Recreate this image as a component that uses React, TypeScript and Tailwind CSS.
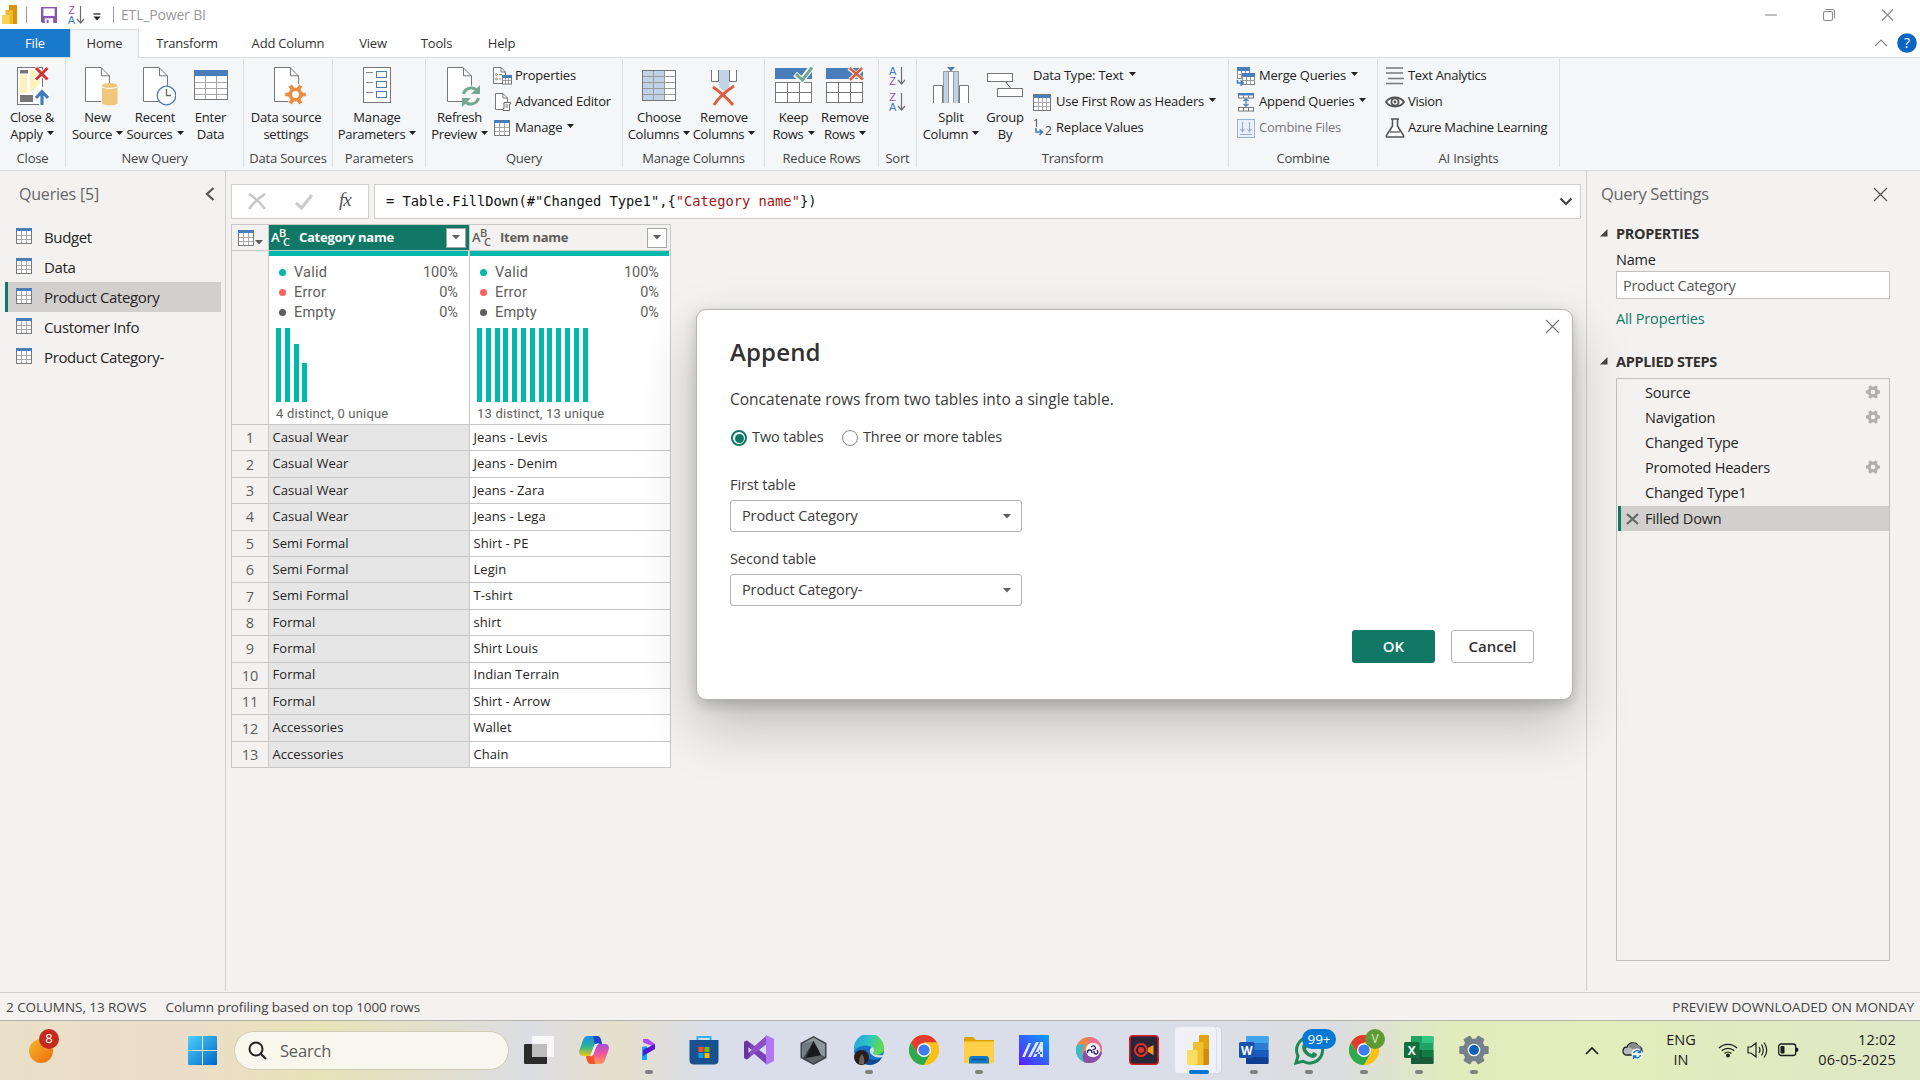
import React from "react";

type Kids = { children?: React.ReactNode };

/* ---------- small shared pieces ---------- */
function Caret() {
  return (
    <svg width="7" height="4" viewBox="0 0 7 4" className="-mt-[6px] ml-[5px] inline-block shrink-0 align-middle">
      <path d="M0 0H7L3.5 4Z" fill="#1f1f1f" />
    </svg>
  );
}

function GridIcon({ w = 16, h = 16 }: { w?: number; h?: number }) {
  return (
    <svg width={w} height={h} viewBox="0 0 16 16" className="shrink-0" shapeRendering="crispEdges">
      <rect x="0.5" y="0.5" width="15" height="15" fill="#fff" stroke="#7a7a7a" />
      <path d="M1 7.5H15M1 11.5H15M5.5 3V15M10.5 3V15" stroke="#a9a9a9" />
      <rect width="16" height="3" fill="#4a7ebb" />
    </svg>
  );
}

const docPath = "M0.5 0.5H16L24.5 9V34.5H0.5Z";
function Doc({ children }: Kids) {
  return (
    <svg width="33" height="40" viewBox="0 0 33 40">
      <path d={docPath} fill="#fff" stroke="#767676" />
      <path d="M16.5 0.5V8.8H24.5" fill="none" stroke="#767676" />
      {children}
    </svg>
  );
}

/* ---------- ribbon icons ---------- */
const CloseApplyIcon = () => (
  <svg width="32" height="40" viewBox="0 0 32 40">
    <rect x="0.5" y="0.5" width="25" height="37" fill="#fff" stroke="#767676" />
    <rect x="3" y="3" width="8" height="3.5" fill="#767676" />
    <path d="M3 8H10V26H3ZM13 3H23V16L13 26Z" fill="#fff2b8" />
    <rect x="3" y="28" width="13" height="7" fill="#767676" />
    <path d="M18 1L31 13M31 1L18 13" stroke="#fff" strokeWidth="5" />
    <path d="M19 1L30.500 12.500M30.500 1L19 12.500" stroke="#d13438" strokeWidth="3" />
    <path d="M25 38V25M18.500 31L25 24L31.500 31" fill="none" stroke="#fff" strokeWidth="6" />
    <path d="M25 38V25M19 31L25 24.500L31 31" fill="none" stroke="#3f7cbf" strokeWidth="3.200" />
  </svg>
);
const NewSourceIcon = () => (
  <Doc>
    <path d="M16 18V36C16 39.500 33 39.500 33 36V18Z" fill="#f5f6f7" />
    <path d="M17 19V36C17 39 32.500 39 32.500 36V19Z" fill="#efc67c" />
    <ellipse cx="24.700" cy="18.500" rx="7.700" ry="2.600" fill="#efc67c" />
    <path d="M17 19.500C18 22 31 22 32.500 19.500" fill="none" stroke="#fff" />
  </Doc>
);
const RecentIcon = () => (
  <Doc>
    <circle cx="23.500" cy="28.500" r="9.300" fill="#fff" stroke="#4a7ebb" strokeWidth="1.300" />
    <path d="M23.500 22V28.500H28" fill="none" stroke="#666" strokeWidth="1.300" />
  </Doc>
);
const EnterDataIcon = () => (
  <svg width="34" height="31" viewBox="0 0 34 31" shapeRendering="crispEdges">
    <rect x="0.500" y="0.500" width="33" height="29" fill="#fff" stroke="#767676" />
    <path d="M1 12.500H33M1 18.500H33M1 24.500H33M11.500 6V29M22.500 6V29" stroke="#a6a6a6" />
    <rect width="34" height="6" fill="#4a7ebb" />
  </svg>
);
function gearD(cx: number, cy: number, ro: number, ri: number, n: number) {
  let d = "";
  for (let i = 0; i < n; i++) {
    const a = (i * 2 * Math.PI) / n;
    const s = Math.PI / n;
    const pts: [number, number][] = [
      [ri, a - s * 0.6],
      [ro, a - s * 0.4],
      [ro, a + s * 0.4],
      [ri, a + s * 0.6],
    ];
    pts.forEach(([r, t], j) => {
      d += (i === 0 && j === 0 ? "M" : "L") + (cx + r * Math.cos(t)).toFixed(2) + " " + (cy + r * Math.sin(t)).toFixed(2);
    });
  }
  return d + "Z";
}
const SettingsDocIcon = () => (
  <Doc>
    <path d={gearD(21.5, 27.5, 11, 7.5, 6)} fill="#e88d3f" stroke="#f5f6f7" strokeWidth="1" />
    <circle cx="21.500" cy="27.500" r="3.400" fill="#fff" />
  </Doc>
);
const ParamsIcon = () => (
  <svg width="28" height="37" viewBox="0 0 28 37" shapeRendering="crispEdges">
    <rect x="0.500" y="0.500" width="27" height="35" fill="#fff" stroke="#767676" />
    <path d="M3 5.500H10M3 15.500H10M3 25.500H10" stroke="#888" />
    <g fill="#fff" stroke="#4a7ebb">
      <rect x="13.500" y="4.500" width="10" height="6" />
      <rect x="13.500" y="14.500" width="10" height="6" />
      <rect x="13.500" y="24.500" width="10" height="6" />
    </g>
  </svg>
);
const RefreshIcon = () => (
  <Doc>
    <circle cx="24" cy="29" r="10.500" fill="#f5f6f7" />
    <path d="M16.500 27A8 8 0 0 1 30.500 24M31.500 31A8 8 0 0 1 17.500 34" fill="none" stroke="#74a892" strokeWidth="3" />
    <path d="M33 18V27H24ZM15 40V31H24Z" fill="#74a892" />
  </Doc>
);
const ChooseColsIcon = () => (
  <svg width="34" height="31" viewBox="0 0 34 31" shapeRendering="crispEdges">
    <rect x="0.500" y="0.500" width="33" height="30" fill="#fff" stroke="#767676" />
    <rect x="1" y="1" width="22" height="29" fill="#bfd2e8" />
    <path d="M1 6.500H33M1 12.500H33M1 18.500H33M1 24.500H33M11.500 1V30M22.500 1V30" stroke="#999" />
  </svg>
);
const RemoveColsIcon = () => (
  <svg width="28" height="37" viewBox="0 0 28 37">
    <path d="M1.500 0V11.500H8.500V0M19.500 0V11.500H26.500V0" fill="#fff" stroke="#767676" />
    <path d="M9 0H19V17L14 21L9 17Z" fill="#bfd2e8" />
    <path d="M3 17C10 22 18 29 23 35M24 16C16 21 9 27 4 35" fill="none" stroke="#d8603f" strokeWidth="2.800" />
  </svg>
);
function RowsIcon({ remove }: { remove?: boolean }) {
  return (
    <svg width="40" height="37" viewBox="0 0 40 37">
      <g shapeRendering="crispEdges">
        <rect x="1" y="1" width="37" height="11" fill="#4a7ebb" />
        <rect x="1.500" y="15.500" width="36" height="20" fill="#fff" stroke="#767676" />
        <path d="M2 25.500H37M13.500 16V35M25.500 16V35" stroke="#767676" />
      </g>
      {remove ? (
        <>
          <path d="M24 1L38 13M38 1L25 13" stroke="#f5f6f7" strokeWidth="4.500" />
          <path d="M24.500 1L38 12.500M37 1L25 13" stroke="#d8603f" strokeWidth="2.500" />
        </>
      ) : (
        <>
          <path d="M21 7L28 13L38 0" fill="none" stroke="#f5f6f7" strokeWidth="6" />
          <path d="M22 7L28.500 13L38 0.500" fill="none" stroke="#74a892" strokeWidth="3" />
        </>
      )}
    </svg>
  );
}
const SplitIcon = () => (
  <svg width="36" height="37" viewBox="0 0 36 37">
    <path d="M14 0H22L18 4.500Z" fill="#4a7ebb" />
    <path d="M0.500 36V18.500H9.500V36M26.500 36V18.500H35.500V36" fill="#fff" stroke="#767676" />
    <path d="M10.500 36V4.500H25.500V36" fill="#fff" stroke="#999" />
    <path d="M11 5H15V36H11ZM21 5H25V36H21Z" fill="#bfd2e8" />
    <path d="M15.500 5V36M20.500 5V36" stroke="#999" />
  </svg>
);
const GroupByIcon = () => (
  <svg width="37" height="37" viewBox="0 0 37 37">
    <path d="M18 14L25 23" stroke="#555" />
    <rect x="0.500" y="6.500" width="25" height="8" fill="#fff" stroke="#767676" />
    <rect x="10.500" y="21.500" width="25" height="8" fill="#fff" stroke="#767676" />
  </svg>
);
function SortIcon({ desc }: { desc?: boolean }) {
  const a = desc ? "Z" : "A";
  const b = desc ? "A" : "Z";
  return (
    <div className="flex h-5 w-[18px] items-stretch">
      <div className={"flex w-[9px] flex-col items-center font-['Liberation_Sans',sans-serif] text-[11px] leading-[10px] " + (desc ? "text-[#8a57b2]" : "text-[#3f7cbf]")}>
        <span className="h-[10px]">{a}</span>
        <span className={"h-[10px] " + (desc ? "text-[#3f7cbf]" : "text-[#8a57b2]")}>{b}</span>
      </div>
      <svg width="9" height="19" viewBox="0 0 9 19">
        <path d="M4.500 1V18M1 14L4.500 18L8 14" fill="none" stroke="#6e6e6e" strokeWidth="1.200" />
      </svg>
    </div>
  );
}
const PropsIcon = () => (
  <svg width="20" height="18" viewBox="0 0 20 18">
    <path d="M0.500 0.500H8L12.500 5V16.500H0.500Z" fill="#fff" stroke="#767676" />
    <path d="M8 0.500V5H12.500" fill="none" stroke="#767676" />
    <circle cx="3.500" cy="7.500" r="1" fill="none" stroke="#777" strokeWidth=".8" />
    <circle cx="3.500" cy="12" r="1" fill="none" stroke="#777" strokeWidth=".8" />
    <path d="M6 7.500H9M6 12H8" stroke="#888" />
    <rect x="9.500" y="8.500" width="9" height="8.500" fill="#fff" stroke="#767676" />
    <path d="M12.500 11V17M15.500 11V17M9 13.500H19" stroke="#888" strokeWidth=".8" />
    <rect x="9" y="8" width="10" height="3" fill="#4a7ebb" />
  </svg>
);
const AdvIcon = () => (
  <svg width="20" height="18" viewBox="0 0 20 18">
    <path d="M2.500 0.500H10L14.500 5V16.500H2.500Z" fill="#fff" stroke="#767676" />
    <path d="M10 0.500V5H14.500" fill="none" stroke="#767676" />
    <path d="M11 9.500H17.500V11H16.500V17.500H10V15.500H11Z" fill="#fff" stroke="#666" />
    <path d="M12.500 12H15M12.500 14H15" stroke="#666" />
  </svg>
);
const MergeIcon = () => (
  <svg width="20" height="19" viewBox="0 0 20 19">
    <rect x="1.500" y="0.500" width="12" height="11" fill="#fff" stroke="#888" />
    <path d="M1 7.500H8M5.500 3V12M9.500 3V7" stroke="#999" />
    <rect x="1" y="0" width="13" height="4" fill="#4a7ebb" />
    <rect x="6.500" y="6.500" width="12" height="11" fill="#fff" stroke="#888" />
    <path d="M6 13.500H19M10.500 9V18M14.500 9V18" stroke="#999" />
    <rect x="6" y="6" width="13" height="4" fill="#4a7ebb" />
    <path d="M1.500 13V16H7M4.500 13.500L7 16L4.500 18.500" fill="none" stroke="#3f7cbf" strokeWidth="1.600" />
  </svg>
);
const AppendIcon = () => (
  <svg width="20" height="19" viewBox="0 0 20 19">
    <rect x="2.500" y="1" width="15" height="4" fill="#fff" stroke="#767676" />
    <rect x="2" y="0" width="16" height="2.500" fill="#4a7ebb" />
    <rect x="2.500" y="14.500" width="15" height="3.500" fill="#fff" stroke="#767676" />
    <path d="M7.500 2.500V5M12.500 2.500V5M7.500 15V18M12.500 15V18" stroke="#767676" />
    <path d="M10 6V13M7.500 8L10 5.800L12.500 8M7.500 11L10 13.200L12.500 11" fill="none" stroke="#4a7ebb" strokeWidth="1.200" />
  </svg>
);
const CombineIcon = () => (
  <svg width="20" height="19" viewBox="0 0 20 19">
    <rect x="1.500" y="0.500" width="17" height="18" fill="#eaf1fa" stroke="#9bb0cf" />
    <path d="M6.500 3V12M4.500 10L6.500 12.500L8.500 10M13.500 3V12M11.500 10L13.500 12.500L15.500 10M4 15.500H16" fill="none" stroke="#9bb0cf" strokeWidth="1.200" />
  </svg>
);
const HeadersIcon = () => (
  <svg width="18" height="17" viewBox="0 0 18 17" shapeRendering="crispEdges">
    <rect x="0.500" y="0.500" width="17" height="16" fill="#fff" stroke="#767676" />
    <path d="M1 8.500H17M1 12.500H17M5.500 1V16M9.500 1V16M13.500 1V16" stroke="#aaa" />
    <rect x="1" y="1" width="16" height="3" fill="#4a7ebb" />
  </svg>
);
const ReplaceIcon = () => (
  <div className="relative h-5 w-[18px] text-[11px] leading-none text-[#444]">
    <span className="absolute -top-px left-0">1</span>
    <span className="absolute top-[7px] left-[12px] text-[12px]">2</span>
    <svg width="9" height="8" viewBox="0 0 9 8" className="absolute top-[10px] left-[2px]">
      <path d="M1 0V4H7M4.500 1.500L7.500 4L4.500 7" fill="none" stroke="#3f7cbf" strokeWidth="1.600" />
    </svg>
  </div>
);
const TextAnIcon = () => (
  <svg width="20" height="18" viewBox="0 0 20 18">
    <path d="M1 1H18M1 6H18M3 11.500H19M1 16.500H18" stroke="#777" strokeWidth="1.400" />
  </svg>
);
const EyeIcon = () => (
  <svg width="20" height="14" viewBox="0 0 20 14">
    <path d="M1 7C5 1 15 1 19 7C15 13 5 13 1 7Z" fill="#fff" stroke="#555" strokeWidth="1.900" />
    <circle cx="10" cy="7" r="3.600" fill="none" stroke="#555" strokeWidth="1.900" />
    <circle cx="10" cy="7" r="1.400" fill="#555" />
  </svg>
);
const FlaskIcon = () => (
  <svg width="20" height="20" viewBox="0 0 20 20">
    <path d="M7.500 1V8L1.500 17.500V19H18.500V17.500L12.500 8V1M6 1H14" fill="#fff" stroke="#555" strokeWidth="1.600" />
    <path d="M5 14H15" stroke="#666" strokeWidth="1.400" />
  </svg>
);

/* ---------- ribbon layout ---------- */
function Big({ icon, a, b, caret, cls }: { icon: React.ReactNode; a: string; b: string; caret?: boolean; cls: string }) {
  return (
    <div className={"flex shrink-0 flex-col items-center " + cls}>
      <div className="flex h-[43px] items-start justify-center pt-px">{icon}</div>
      <div className="leading-[17px] whitespace-nowrap">{a}</div>
      <div className="flex items-center leading-[17px] tracking-[-0.270px] whitespace-nowrap">
        {b}
        {caret && (
          <svg width="7" height="4" viewBox="0 0 7 4" className="-mt-[4px] ml-[4px] shrink-0">
            <path d="M0 0H7L3.5 4Z" fill="#1f1f1f" />
          </svg>
        )}
      </div>
    </div>
  );
}
function Small({ icon, text, caret, dim, gap = "w-[22px]" }: { icon?: React.ReactNode; text: string; caret?: boolean; dim?: boolean; gap?: string }) {
  return (
    <div className={"flex h-[26px] items-center whitespace-nowrap " + (dim ? "text-[#777]" : "")}>
      {icon && <div className={"flex shrink-0 items-center " + gap}>{icon}</div>}
      <span>
        {text}
        {caret && <Caret />}
      </span>
    </div>
  );
}
function Group({ label, cls, children }: Kids & { label: string; cls: string }) {
  return (
    <div className={"flex h-[108px] shrink-0 flex-col border-r border-[#dcdee0] pt-[7px] " + cls}>
      <div className="flex h-[85px]">{children}</div>
      <div className="flex h-[17px] items-center justify-center pt-px whitespace-nowrap text-[#444]">{label}</div>
    </div>
  );
}

function TitleBar() {
  return (
    <div className="flex h-[29px] items-center bg-white">
      <svg width="16" height="20" viewBox="0 0 16 20" className="ml-[2px]">
        <rect x="7" y="0" width="8" height="19" fill="#d9930d" />
        <rect x="3.500" y="5" width="7.500" height="14" fill="#efbb2a" />
        <rect x="0" y="10" width="7.500" height="9" fill="#f7d64f" />
      </svg>
      <div className="ml-2 h-4 w-px bg-[#999]" />
      <svg width="16" height="16" viewBox="0 0 17 17" className="ml-[14px]">
        <path d="M0 0H17V17H1.500L0 15.500Z" fill="#8a57b2" />
        <rect x="2.500" y="1.500" width="12" height="8" fill="#fff" />
        <rect x="4" y="12" width="9" height="5" fill="#fff" />
        <rect x="6" y="13.500" width="2" height="3.500" fill="#8a57b2" />
      </svg>
      <div className="ml-[10px]">
        <SortIcon desc />
      </div>
      <svg width="8" height="8" viewBox="0 0 8 8" className="mt-1 ml-[8px]">
        <path d="M0.500 1H7.500" stroke="#222" strokeWidth="1.300" />
        <path d="M0.500 3.500H7.500L4 7.500Z" fill="#222" />
      </svg>
      <div className="ml-[12px] h-4 w-px bg-[#999]" />
      <div className="ml-[7px] text-[14px] tracking-[-0.170px] text-[#999]">ETL_Power BI</div>
      <div className="flex-1" />
      <svg width="130" height="14" viewBox="0 0 130 14" className="mr-[26px]" fill="none" stroke="#8a8a8a" strokeWidth="1.100">
        <path d="M1 7H13" />
        <rect x="59.500" y="3.500" width="9" height="9" rx="1.500" />
        <path d="M61.500 1.500H68.500Q70.500 1.500 70.500 3.500V10.500" />
        <path d="M118 1.500L129 12.500M129 1.500L118 12.500" />
      </svg>
    </div>
  );
}

function Tabs() {
  return (
    <div className="flex h-[29px] items-stretch border-b border-[#d8d9db] bg-white text-[13px] leading-[29px] tracking-[-0.2px] text-[#333]">
      <div className="w-[70px] bg-[#1979ca] text-center text-white">File</div>
      <div className="-mb-px w-[69px] border border-b-0 border-[#d8d9db] bg-[#f5f6f7] text-center leading-[27px]">Home</div>
      <div className="w-[96px] text-center">Transform</div>
      <div className="w-[106px] text-center">Add Column</div>
      <div className="w-[64px] text-center">View</div>
      <div className="w-[63px] text-center">Tools</div>
      <div className="w-[67px] text-center">Help</div>
      <div className="flex-1" />
      <svg width="46" height="22" viewBox="0 0 46 22" className="mt-[3px]">
        <path d="M1 14L7 8L13 14" fill="none" stroke="#888" strokeWidth="1.200" />
        <circle cx="33" cy="11" r="9.800" fill="#0a66c2" />
        <text x="33" y="16" textAnchor="middle" fontSize="14" fill="#fff" fontFamily="Open Sans">?</text>
      </svg>
    </div>
  );
}

function Ribbon() {
  return (
    <div className="flex h-[113px] items-start border-b border-[#d6d8da] bg-[#f5f6f7] pt-px text-[13px] tracking-[-0.2px] text-[#222]">
      <Group label="Close" cls="w-[66px]">
        <Big icon={<div className="ml-[2px]"><CloseApplyIcon /></div>} a="Close &" b="Apply" caret cls="w-[64px]" />
      </Group>
      <Group label="New Query" cls="w-[178px]">
        <Big icon={<div className="ml-2"><NewSourceIcon /></div>} a="New" b="Source" caret cls="ml-[3px] w-[57px]" />
        <Big icon={<div className="ml-2"><RecentIcon /></div>} a="Recent" b="Sources" caret cls="w-[58px]" />
        <Big icon={<div className="pt-[3px]"><EnterDataIcon /></div>} a="Enter" b="Data" cls="w-[53px]" />
      </Group>
      <Group label="Data Sources" cls="w-[89px]">
        <Big icon={<div className="ml-2"><SettingsDocIcon /></div>} a="Data source" b="settings" cls="w-[84px]" />
      </Group>
      <Group label="Parameters" cls="w-[93px]">
        <Big icon={<ParamsIcon />} a="Manage" b="Parameters" caret cls="w-[88px]" />
      </Group>
      <Group label="Query" cls="w-[197px]">
        <Big icon={<div className="ml-2"><RefreshIcon /></div>} a="Refresh" b="Preview" caret cls="w-[67px]" />
        <div className="-mt-[3px] flex flex-col">
          <Small icon={<PropsIcon />} text="Properties" />
          <Small icon={<AdvIcon />} text="Advanced Editor" />
          <Small icon={<GridIcon w={17} h={16} />} text="Manage" caret />
        </div>
      </Group>
      <Group label="Manage Columns" cls="w-[142px]">
        <Big icon={<div className="pt-[3px]"><ChooseColsIcon /></div>} a="Choose" b="Columns" caret cls="ml-[3px] w-[66px]" />
        <Big icon={<div className="pt-[3px]"><RemoveColsIcon /></div>} a="Remove" b="Columns" caret cls="w-[64px]" />
      </Group>
      <Group label="Reduce Rows" cls="w-[114px]">
        <Big icon={<RowsIcon />} a="Keep" b="Rows" caret cls="ml-[3px] w-[51px]" />
        <Big icon={<RowsIcon remove />} a="Remove" b="Rows" caret cls="w-[52px]" />
      </Group>
      <Group label="Sort" cls="w-[38px]">
        <div className="ml-[9px] flex flex-col gap-[6px]">
          <SortIcon />
          <SortIcon desc />
        </div>
      </Group>
      <Group label="Transform" cls="w-[312px]">
        <Big icon={<SplitIcon />} a="Split" b="Column" caret cls="ml-[2px] w-[64px]" />
        <Big icon={<GroupByIcon />} a="Group" b="By" cls="w-[44px]" />
        <div className="-mt-[3px] ml-[6px] flex flex-col">
          <Small text="Data Type: Text" caret />
          <Small icon={<HeadersIcon />} text="Use First Row as Headers" caret gap="w-[23px]" />
          <Small icon={<ReplaceIcon />} text="Replace Values" gap="w-[23px]" />
        </div>
      </Group>
      <Group label="Combine" cls="w-[149px]">
        <div className="-mt-[3px] ml-[7px] flex flex-col">
          <Small icon={<MergeIcon />} text="Merge Queries" caret gap="w-[23px]" />
          <Small icon={<AppendIcon />} text="Append Queries" caret gap="w-[23px]" />
          <Small icon={<CombineIcon />} text="Combine Files" dim gap="w-[23px]" />
        </div>
      </Group>
      <Group label="AI Insights" cls="w-[182px]">
        <div className="-mt-[3px] ml-[7px] flex flex-col tracking-[-0.320px]">
          <Small icon={<TextAnIcon />} text="Text Analytics" gap="w-[23px]" />
          <Small icon={<EyeIcon />} text="Vision" gap="w-[23px]" />
          <Small icon={<FlaskIcon />} text="Azure Machine Learning" gap="w-[23px]" />
        </div>
      </Group>
    </div>
  );
}

/* ---------- queries pane ---------- */
const queries = ["Budget", "Data", "Product Category", "Customer Info", "Product Category-"];
function QueriesPane() {
  return (
    <div className="h-[820px] w-[226px] shrink-0 border-r border-[#cfcfcf]">
      <div className="flex h-[46px] items-center justify-between pr-[10px] pl-[19px]">
        <span className="text-[16px] tracking-[-0.2px] text-[#666]">Queries [5]</span>
        <svg width="10" height="14" viewBox="0 0 10 14">
          <path d="M8.500 1L2 7L8.500 13" fill="none" stroke="#555" strokeWidth="2.200" />
        </svg>
      </div>
      <div className="pt-[5px] pr-1 pl-[5px]">
        {queries.map((q) => (
          <div
            key={q}
            className={
              "flex h-[30px] items-center border-l-[3px] pl-2 text-[15px] tracking-[-0.370px] text-[#252423] " +
              (q === "Product Category" ? "border-[#117865] bg-[#d2d0ce]" : "border-transparent")
            }
          >
            <div className="-mt-[2px] mr-3">
              <GridIcon />
            </div>
            {q}
          </div>
        ))}
      </div>
    </div>
  );
}

/* ---------- data grid ---------- */
const rows: [string, string][] = [
  ["Casual Wear", "Jeans - Levis"],
  ["Casual Wear", "Jeans - Denim"],
  ["Casual Wear", "Jeans - Zara"],
  ["Casual Wear", "Jeans - Lega"],
  ["Semi Formal", "Shirt - PE"],
  ["Semi Formal", "Legin"],
  ["Semi Formal", "T-shirt"],
  ["Formal", "shirt"],
  ["Formal", "Shirt Louis"],
  ["Formal", "Indian Terrain"],
  ["Formal", "Shirt - Arrow"],
  ["Accessories", "Wallet"],
  ["Accessories", "Chain"],
];
const stats = [
  { label: "Valid", pct: "100%", dot: "bg-[#01b8aa]" },
  { label: "Error", pct: "0%", dot: "bg-[#fd625e]" },
  { label: "Empty", pct: "0%", dot: "bg-[#605e5c]" },
];
function ColHeader({ name, active }: { name: string; active?: boolean }) {
  return (
    <div className={"flex w-[201px] items-center border-r border-[#c8c8c8] pr-[3px] pl-[2px] " + (active ? "bg-[#117865] text-white" : "bg-[#f3f2f1] text-[#605e5c]")}>
      <div className="relative h-[20px] w-[20px] text-[13px] leading-none font-semibold">
        <span className="absolute top-[3px] left-0">A</span>
        <span className="absolute -top-px left-[8px] text-[11px]">B</span>
        <span className="absolute top-[8px] left-[12px] text-[11px]">C</span>
      </div>
      <span className="ml-2 flex-1 pt-px text-[13px] font-bold tracking-[-0.27px]">{name}</span>
      <div className="flex h-5 w-5 items-center justify-center border border-[#a6a6a6] bg-white">
        <svg width="8" height="5" viewBox="0 0 8 5">
          <path d="M0 0H8L4 4.500Z" fill="#605e5c" />
        </svg>
      </div>
    </div>
  );
}
function Profile({ bars, caption }: { bars: number[]; caption: string }) {
  return (
    <div className="w-[201px] border-r border-[#c8c8c8] bg-white font-[Roboto] text-[#605e5c]">
      <div className="mr-px h-[5px] bg-[#01b8aa]" />
      <div className="pt-[7px] pr-[11px] pl-[10px] text-[14.500px] tracking-[0.2px]">
        {stats.map((s) => (
          <div key={s.label} className="flex h-5 items-center">
            <span className={"-mt-[2px] mr-2 h-[7px] w-[7px] rounded-full " + s.dot} />
            <span className="flex-1">{s.label}</span>
            <span className="tracking-normal">{s.pct}</span>
          </div>
        ))}
      </div>
      <div className="mt-[5px] ml-[7px] flex h-[74px] items-end gap-[3.8px]">
        {bars.map((b, i) => (
          <div key={i} className="w-[5px] bg-[#01b8aa]" style={{ height: b }} />
        ))}
      </div>
      <div className="ml-[7px] pt-[3px] text-[13px] leading-[18px] tracking-[0.190px]">{caption}</div>
    </div>
  );
}
function DataTable() {
  return (
    <div className="mt-[5px] ml-[5px] w-[440px] border-t border-l border-[#c8c8c8]">
      <div className="flex h-[26px] border-b border-[#c8c8c8]">
        <div className="flex w-[37px] items-center border-r border-[#c8c8c8] pl-[6px]">
          <GridIcon />
          <svg width="8" height="5" viewBox="0 0 8 5" className="mt-[10px] ml-px">
            <path d="M0 0H8L4 4.500Z" fill="#605e5c" />
          </svg>
        </div>
        <ColHeader name="Category name" active />
        <ColHeader name="Item name" />
      </div>
      <div className="flex h-[174px] border-b border-[#c8c8c8]">
        <div className="w-[37px] border-r border-[#c8c8c8]" />
        <Profile bars={[74, 74, 58, 39]} caption="4 distinct, 0 unique" />
        <Profile bars={Array(13).fill(74)} caption="13 distinct, 13 unique" />
      </div>
      {rows.map(([a, b], i) => (
        <div key={i} className="flex h-[26.4px] border-b border-[#c8c8c8] text-[13px] text-[#252423]">
          <div className="flex w-[37px] items-center justify-center border-r border-[#c8c8c8] pt-px text-[14.500px] text-[#605e5c]">{i + 1}</div>
          <div className="flex w-[201px] items-center border-r border-[#c8c8c8] bg-[#e6e6e6] pl-[3.500px] tracking-[0.060px]">{a}</div>
          <div className="flex w-[201px] items-center border-r border-[#c8c8c8] bg-white pl-[3.500px] tracking-[0.060px]">{b}</div>
        </div>
      ))}
    </div>
  );
}
function FormulaBar() {
  return (
    <div className="mt-[13px] ml-[5px] flex h-[35px] gap-[5px]">
      <div className="flex w-[138px] items-center border border-[#d0d0d0] bg-white pl-4">
        <svg width="18" height="17" viewBox="0 0 18 17">
          <path d="M1 1C7 5 13 10 17 16M17 1C11 5 5 10 1 16" fill="none" stroke="#c8c8c8" strokeWidth="2.600" />
        </svg>
        <svg width="19" height="16" viewBox="0 0 19 16" className="ml-[29px]">
          <path d="M1 9L6.500 14L17 1" fill="none" stroke="#cccccc" strokeWidth="3.200" />
        </svg>
        <span className="-mt-[3px] ml-[25px] font-['Liberation_Serif'] text-[19px] tracking-[-1px] text-[#555] italic">fx</span>
      </div>
      <div className="flex w-[1207px] items-center justify-between border border-[#d0d0d0] bg-white pr-[7px] pl-[11px]">
        <span className="font-['DejaVu_Sans_Mono','Liberation_Mono',monospace] text-[13.750px] whitespace-pre text-[#111]">
          {'= Table.FillDown(#"Changed Type1",{'}
          <span className="text-[#a31515]">"Category name"</span>
          {"})"}
        </span>
        <svg width="14" height="10" viewBox="0 0 14 10">
          <path d="M1.500 1.500L7 7L12.500 1.500" fill="none" stroke="#444" strokeWidth="2.200" />
        </svg>
      </div>
    </div>
  );
}

/* ---------- append dialog ---------- */
function Select({ label, value }: { label: string; value: string }) {
  return (
    <div>
      <div className="leading-[20px]">{label}</div>
      <div className="mt-[5px] flex h-[32px] w-[292px] items-center justify-between rounded-[3px] border border-[#b3b0ad] bg-white pr-[10px] pl-[11px]">
        {value}
        <svg width="8" height="5" viewBox="0 0 8 5">
          <path d="M0 0H8L4 4.500Z" fill="#605e5c" />
        </svg>
      </div>
    </div>
  );
}
function Dialog() {
  return (
    <div className="absolute top-[309px] left-[696px] h-[391px] w-[877px] rounded-[10px] border border-[#b5b3b1] bg-white pl-[33px] text-[14.500px] tracking-[-0.100px] text-[#3b3a39] shadow-[0_26px_58px_rgba(0,0,0,0.22),0_5px_14px_rgba(0,0,0,0.18)]">
      <svg width="15" height="15" viewBox="0 0 15 15" className="absolute top-[9px] right-[12px]">
        <path d="M1 1L14 14M14 1L1 14" stroke="#777" strokeWidth="1.200" />
      </svg>
      <h1 className="pt-[25px] text-[24px] leading-[34px] font-semibold tracking-[0.150px] text-[#323130]">Append</h1>
      <p className="mt-[19px] text-[15.500px] leading-[22px] tracking-[0.010px]">Concatenate rows from two tables into a single table.</p>
      <div className="mt-[16px] flex h-[22px] items-center">
        <span className="mt-[2px] mr-[5px] ml-[1px] flex h-4 w-4 items-center justify-center rounded-full border-2 border-[#117865]">
          <span className="h-[9px] w-[9px] rounded-full bg-[#117865]" />
        </span>
        <span className="w-[71px] whitespace-nowrap">Two tables</span>
        <span className="mt-[2px] mr-[5px] ml-[19px] h-4 w-4 rounded-full border border-[#8a8886] bg-white" />
        <span className="tracking-[-0.150px]">Three or more tables</span>
      </div>
      <div className="mt-[27px] flex flex-col gap-[17px]">
        <Select label="First table" value="Product Category" />
        <Select label="Second table" value="Product Category-" />
      </div>
      <div className="mt-[24px] flex justify-end gap-4 pr-[38px] font-semibold tracking-normal">
        <div className="flex h-[33px] w-[83px] items-center justify-center rounded-[3px] bg-[#117865] text-[15px] text-white">OK</div>
        <div className="flex h-[33px] w-[83px] items-center justify-center rounded-[3px] border border-[#b3b0ad] text-[15px] text-[#323130]">Cancel</div>
      </div>
    </div>
  );
}

/* ---------- settings pane ---------- */
const steps: { name: string; gear?: boolean }[] = [
  { name: "Source", gear: true },
  { name: "Navigation", gear: true },
  { name: "Changed Type" },
  { name: "Promoted Headers", gear: true },
  { name: "Changed Type1" },
  { name: "Filled Down" },
];
function Heading({ text }: { text: string }) {
  return (
    <div className="flex h-6 items-center text-[14.500px] font-bold tracking-[-0.350px] text-[#323130]">
      <svg width="8" height="8" viewBox="0 0 8 8" className="-mt-[2px] mr-[8px]">
        <path d="M7.500 0V7.500H0Z" fill="#444" />
      </svg>
      {text}
    </div>
  );
}
function SettingsPane() {
  return (
    <div className="h-[820px] w-[334px] border-l border-[#cfcfcf] pl-[13px] text-[14.500px] tracking-[-0.200px] text-[#252423]">
      <div className="flex h-[47px] items-center justify-between pr-[32px] pl-px">
        <span className="text-[16.500px] tracking-[-0.360px] text-[#666]">Query Settings</span>
        <svg width="15" height="15" viewBox="0 0 15 15">
          <path d="M1 1L14 14M14 1L1 14" stroke="#555" strokeWidth="1.200" />
        </svg>
      </div>
      <div className="pt-[4px]">
        <Heading text="PROPERTIES" />
        <div className="mt-[4px] ml-[16px]">
          <div className="h-[21px] leading-[20px]">Name</div>
          <div className="flex h-[28px] w-[274px] items-center border border-[#c0c0c0] bg-white pt-[2px] pl-[6px] tracking-[-0.300px] text-[#555]">Product Category</div>
          <div className="mt-[9px] leading-[22px] tracking-[-0.130px] text-[#117865]">All Properties</div>
        </div>
        <div className="mt-[20px]">
          <Heading text="APPLIED STEPS" />
        </div>
        <div className="mt-[4px] ml-[16px] h-[583px] w-[274px] border border-[#c0c0c0] pt-px">
          {steps.map((s) => (
            <div key={s.name} className={"ml-px flex h-[25.200px] items-center border-l-[3px] pr-2 " + (s.name === "Filled Down" ? "border-[#117865] bg-[#d2d0ce]" : "border-transparent")}>
              <div className="w-[24px] pl-[5px]">
                {s.name === "Filled Down" && (
                  <svg width="13" height="12" viewBox="0 0 13 12">
                    <path d="M1 1L12 11M12 1L1 11" stroke="#666" strokeWidth="2.200" />
                  </svg>
                )}
              </div>
              <span className="flex-1">{s.name}</span>
              {s.gear && (
                <svg width="16" height="16" viewBox="0 0 16 16" className="-mt-[2px]">
                  <path d={gearD(8, 8, 7.2, 5.4, 6)} fill="#b0b0b0" />
                  <circle cx="8" cy="8" r="2.300" fill="#f3f2f1" />
                </svg>
              )}
            </div>
          ))}
        </div>
      </div>
    </div>
  );
}

/* ---------- taskbar ---------- */
const Chrome = () => (
  <svg width="30" height="30" viewBox="0 0 30 30">
    <circle cx="15" cy="15" r="15" fill="#fbc116" />
    <path d="M2 7.500A15 15 0 0 1 28 7.500H15L8.500 18.700Z" fill="#e33b2e" />
    <path d="M2 7.500A15 15 0 0 0 15 30L21.500 18.700L8.500 18.700Z" fill="#2da94f" />
    <path d="M15 7.500H28A15 15 0 0 1 15 30L21.500 18.700Z" fill="#fbc116" />
    <circle cx="15" cy="15" r="7" fill="#fff" />
    <circle cx="15" cy="15" r="5.600" fill="#3b7ded" />
  </svg>
);
function Office({ letter, word }: { letter: string; word?: boolean }) {
  const c = word ? ["#41a5ee", "#2b7cd3", "#185abd", "#103f91", "#1b52ad"] : ["#33c481", "#21a366", "#107c41", "#185c37", "#0f703b"];
  return (
    <svg width="30" height="28" viewBox="0 0 30 28">
      <rect x="7" y="0" width="22.500" height="28" rx="1.500" fill={c[1]} />
      <rect x="7" y="0" width="22.500" height="7" rx="1" fill={c[0]} />
      <rect x="7" y="14" width="22.500" height="7" fill={c[2]} />
      <rect x="7" y="21" width="22.500" height="7" rx="1" fill={c[3]} />
      {!word && <rect x="7" y="0" width="11" height="14" fill="#21a366" />}
      {!word && <rect x="7" y="14" width="11" height="7" fill="#185c37" />}
      <rect x="0" y="6" width="15.500" height="16" rx="1.500" fill={c[4]} />
      <text x="7.700" y="18.500" textAnchor="middle" fontSize="12" fontWeight="700" fontFamily="Open Sans" fill="#fff">{letter}</text>
    </svg>
  );
}
const TaskView = () => (
  <svg width="30" height="30" viewBox="0 0 30 30">
    <rect x="0" y="9" width="23" height="20" rx="1" fill="#2b2b2b" />
    <rect x="8" y="1" width="22" height="21" rx="1" fill="#fff" fillOpacity=".75" />
    <rect x="8" y="9" width="15" height="13" fill="#bdbdbd" />
  </svg>
);
const Copilot = () => (
  <svg width="30" height="28" viewBox="0 0 30 28">
    <defs>
      <linearGradient id="cpa" x1="0" y1="0" x2="0" y2="1">
        <stop offset="0" stopColor="#1a8df0" />
        <stop offset=".55" stopColor="#2fb58c" />
        <stop offset="1" stopColor="#f3c813" />
      </linearGradient>
      <linearGradient id="cpb" x1="0" y1="0" x2="0" y2="1">
        <stop offset="0" stopColor="#a64be0" />
        <stop offset=".5" stopColor="#f0569a" />
        <stop offset="1" stopColor="#ff9a4d" />
      </linearGradient>
    </defs>
    <path d="M9 0H18Q21 0 22 4L23 8H18Q16 8 15 11L13 17Q12 20 9 20H4Q-1 20 0.500 14L4 4Q5.500 0 9 0Z" fill="url(#cpa)" />
    <path d="M14 0H18Q21 0 22 4L23 8H18L16 9Z" fill="#1b48c8" />
    <path d="M21 28H12Q9 28 8 24L7 20H10Q13 20 14 17L16 11Q17 8 20 8H26Q31 8 29.500 14L26 24Q24.500 28 21 28Z" fill="url(#cpb)" />
    <path d="M16 28H12Q9 28 8 24L7 20H10L14 18Z" fill="#f2552c" />
    <path d="M16 9L18 8.500Q16.500 10 15.500 13L13.500 18.500L11.500 20Q12.500 19 13.500 16Z" fill="#eef0f4" stroke="#eef0f4" strokeWidth="1.500" />
  </svg>
);
const PIcon = () => (
  <svg width="14" height="24" viewBox="0 0 14 24">
    <path d="M1 1L6 1L13 6V11L9 7.500L1 4.500Z" fill="#b14bff" />
    <path d="M13 6V11L1 18V12Z" fill="#5a10d8" />
    <path d="M0 9L5 8V22H0Z" fill="#13a8f5" />
    <path d="M5 9.500L1 12V18L5 15.500Z" fill="#3d1fd0" />
  </svg>
);
const Store = () => (
  <svg width="30" height="30" viewBox="0 0 30 30">
    <path d="M8.500 5V2H21.500V5" fill="none" stroke="#2fb4f0" strokeWidth="2" />
    <path d="M0.500 5H29.500V25Q29.500 29.500 25 29.500H5Q0.500 29.500 0.500 25Z" fill="#17528e" />
    <path d="M9.500 12H14.500V17H9.500Z" fill="#f25022" />
    <path d="M15.500 12H20.500V17H15.500Z" fill="#7fba00" />
    <path d="M9.500 18H14.500V23H9.500Z" fill="#00a4ef" />
    <path d="M15.500 18H20.500V23H15.500Z" fill="#ffb900" />
  </svg>
);
const VS = () => (
  <svg width="30" height="30" viewBox="0 0 30 30">
    <path d="M0 7L3 5.500L23 20L22 29L0 10Z" fill="#7b42b8" />
    <path d="M0 7V23L3 24.500L23 9L22 1L14 8L4 17V12Z" fill="#8c50c8" />
    <path d="M0 7L3 5.500L6 8.500V21.500L3 24.500L0 23Z" fill="#6a32a3" />
    <path d="M22 0L30 4V26L22 30Z" fill="#b178f2" />
    <path d="M4.500 12V18L7.500 15Z" fill="#dadeea" />
    <path d="M22 10L15 15L22 20Z" fill="#dadeea" />
  </svg>
);
const Hex = () => (
  <svg width="27" height="29" viewBox="0 0 27 29">
    <path d="M13.500 0L26.500 7V22L13.500 29L0.500 22V7Z" fill="#3c4146" />
    <path d="M13.500 1.500L25 8V21L21 19L13.500 5L3 22L2 21V8Z" fill="#8d979d" />
    <path d="M2 8L13.500 5L3 22Z" fill="#6f797f" />
    <path d="M13.500 5L21 19L6 22Z" fill="#17191c" />
    <path d="M5 22.500L21 19.500L24 21.500L13.500 27.500Z" fill="#5b6369" />
  </svg>
);
const Edge = () => (
  <svg width="30" height="30" viewBox="0 0 30 30">
    <defs>
      <linearGradient id="edg" x1="0" y1="0" x2="1" y2="0.300">
        <stop offset="0" stopColor="#1f9de0" />
        <stop offset=".5" stopColor="#2cc3c8" />
        <stop offset="1" stopColor="#5fdc4e" />
      </linearGradient>
    </defs>
    <circle cx="15" cy="15" r="15" fill="#1573c8" />
    <path d="M0 14A15 15 0 0 1 30 13Q30 20 22 20Q18 20 18.500 17Q21 13 15 11Q7 9 0 16Z" fill="url(#edg)" />
    <path d="M12 14Q10 24 20 25Q25 25 28 22Q24 30 15 30Q8 28 8 20Q9 16 12 14Z" fill="#0d4a94" />
    <path d="M18 12Q22 15 18.500 18Q20 21 30 20L28.500 22Q22 24 17 19Q14 15 18 12Z" fill="#dadeea" />
    <circle cx="7.500" cy="22.500" r="7.500" fill="#2a1d18" />
    <path d="M5 29Q5 22 8 19Q11 23 10 29Z" fill="#6a625c" />
  </svg>
);
const Folder = () => (
  <svg width="30" height="27" viewBox="0 0 30 27">
    <path d="M0 2Q0 0 2 0H9L12 3H30V8H0Z" fill="#dfa000" />
    <rect x="0" y="4.500" width="30" height="22" rx="1" fill="#ffcf48" />
    <path d="M5 26.500V22Q5 19 8 19H22Q25 19 25 22V26.500Z" fill="#1379c8" />
    <path d="M8 22.500H22" stroke="#0b5596" strokeWidth="1.500" />
  </svg>
);
const Asus = () => (
  <svg width="30" height="30" viewBox="0 0 30 30">
    <defs>
      <linearGradient id="asg" x1="0" y1="1" x2="1" y2="0">
        <stop offset="0" stopColor="#5a1fff" />
        <stop offset="1" stopColor="#0ba0ff" />
      </linearGradient>
    </defs>
    <rect width="30" height="30" fill="url(#asg)" />
    <path d="M3 22H6L12 8H9.500ZM9 22H12L20 7H17ZM14 22H17L21 14V22H24V7H21.500ZM17 17H23V19H16Z" fill="#dfe8ff" />
  </svg>
);
const Swirl = () => (
  <svg width="28" height="28" viewBox="0 0 28 28">
    <circle cx="14" cy="14" r="13" fill="#f08348" />
    <path d="M14 1A13 13 0 0 1 27 14L14 14Z" fill="#ee6f94" />
    <path d="M2 9A13 13 0 0 0 12 27Q4 18 10 8Z" fill="#3fb9c8" />
    <path d="M9 26A13 13 0 0 0 27 16L14 12Q5 16 9 26Z" fill="#8b4ea8" />
    <circle cx="18" cy="14" r="7.300" fill="#f4f2fa" />
    <path d="M13 17Q11.500 15 14 14Q17 13.500 17 17M16 11Q19 8.500 20.500 11.500Q20.500 14 17.500 13.500M22 14Q24 16.500 21.500 18Q18.500 18 19 15" fill="none" stroke="#2b2468" strokeWidth="1.400" />
  </svg>
);
const Rec = () => (
  <svg width="30" height="30" viewBox="0 0 30 30">
    <rect x="0.800" y="0.800" width="28.400" height="28.400" rx="3" fill="#2b2538" stroke="#d42027" strokeWidth="1.600" />
    <circle cx="12" cy="15" r="6" fill="none" stroke="#e5332c" strokeWidth="1.800" />
    <circle cx="12" cy="15" r="3" fill="#e5332c" />
    <path d="M19 13L24.500 10V20L19 17Z" fill="#f79a1c" />
  </svg>
);
const PBI = () => (
  <svg width="22" height="30" viewBox="0 0 22 30">
    <rect x="12" y="0" width="10" height="30" rx="1" fill="#cf8d0c" />
    <rect x="12" y="0" width="10" height="14" rx="1" fill="#e2a312" />
    <rect x="6" y="7" width="10.500" height="23" rx="1" fill="#efc02f" />
    <rect x="0" y="15" width="10.500" height="15" rx="1" fill="#f9dc62" />
  </svg>
);
const WhatsApp = () => (
  <svg width="30" height="30" viewBox="0 0 30 30">
    <path d="M2 28L4 21A13 13 0 1 1 9 26.300Z" fill="none" stroke="#1d8a55" strokeWidth="3" />
    <path d="M9 9Q11 7 12.500 10L13 12L12 14Q14 18 17.500 19L19.500 17L23 19Q23 22 19 23Q13 22 9.500 17Q7 12 9 9Z" fill="#1d8a55" />
  </svg>
);
const Gear = () => (
  <svg width="30" height="30" viewBox="0 0 30 30">
    <path d={gearD(15, 15, 14, 10.5, 6)} fill="#76808a" stroke="#76808a" strokeWidth="2" strokeLinejoin="round" />
    <circle cx="15" cy="15" r="6.300" fill="#fff" />
    <circle cx="15" cy="15" r="5" fill="#0f62b3" />
  </svg>
);
function Cell({ children, run, badge }: Kids & { run?: boolean; badge?: React.ReactNode }) {
  return (
    <div className="relative flex h-[59px] w-[55px] shrink-0 items-center justify-center pb-px">
      {children}
      {run && <span className="absolute bottom-[6px] left-[24px] h-1 w-2 rounded-full bg-[#808080]" />}
      {badge}
    </div>
  );
}
function Taskbar() {
  return (
    <div className="flex h-[60px] items-center border-t border-[#b4b3ae] bg-[linear-gradient(90deg,#e9e0c6_0px,#ecddcb_170px,#e8e3b8_320px,#e2e0ca_420px,#dcdde4_530px,#e6dfcb_620px,#dadeea_710px,#dadeea_1140px,#dcdddf_1340px,#e2ebbc_1450px,#e3ecbb_1600px,#dfe8c6_1920px)] text-[#1c1c1c]">
      <div className="relative ml-[29px] h-[30px] w-[34px] shrink-0">
        <div className="mt-[3px] h-6 w-6 rounded-full bg-gradient-to-br from-[#f0b92a] to-[#f0660c]" />
        <div className="absolute -top-[7px] left-[10px] flex h-5 w-5 items-center justify-center rounded-full bg-[#c42b1c] text-[13px] text-white">8</div>
      </div>
      <svg width="29" height="29" viewBox="0 0 29 29" className="ml-[125px] shrink-0">
        <defs>
          <linearGradient id="win" x1="0" y1="0" x2="1" y2="1">
            <stop offset="0" stopColor="#4fd0fb" />
            <stop offset="1" stopColor="#0067c8" />
          </linearGradient>
        </defs>
        <path d="M0 1Q0 0 1 0H14V14H0ZM15 0H28Q29 0 29 1V14H15ZM0 15H14V29H1Q0 29 0 28ZM15 15H29V28Q29 29 28 29H15Z" fill="url(#win)" />
      </svg>
      <div className="ml-[17px] flex h-[39px] w-[275px] shrink-0 items-center rounded-full border border-[#cfcbb4] bg-[#fafaf2]/90 pl-[13px]">
        <svg width="19" height="19" viewBox="0 0 19 19">
          <circle cx="8" cy="8" r="6.500" fill="none" stroke="#222" strokeWidth="2" />
          <path d="M12.500 12.500L18 18" stroke="#222" strokeWidth="2.200" />
        </svg>
        <span className="mt-px ml-[13px] text-[16.500px] tracking-[-0.200px] text-[#5c5c5c]">Search</span>
      </div>
      <div className="ml-[2px] flex">
        <Cell><TaskView /></Cell>
        <Cell><Copilot /></Cell>
        <Cell run><PIcon /></Cell>
        <Cell><Store /></Cell>
        <Cell><VS /></Cell>
        <Cell><Hex /></Cell>
        <Cell run><Edge /></Cell>
        <Cell><Chrome /></Cell>
        <Cell run><Folder /></Cell>
        <Cell><Asus /></Cell>
        <Cell><Swirl /></Cell>
        <Cell><Rec /></Cell>
        <Cell badge={<span className="absolute bottom-[6px] left-[18px] h-1 w-5 rounded-full bg-[#0078d4]" />}>
          <div className="absolute top-[5px] left-[8px] h-12 w-[43px] rounded-[4px] border border-[#cfd2db] bg-[#eef0f6]" />
          <div className="absolute top-[5px] left-[3px] flex h-12 w-[43px] items-center justify-center rounded-[4px] border border-[#dcdfe6] bg-[#eff1f6] pl-[5px]">
            <PBI />
          </div>
        </Cell>
        <Cell run><Office letter="W" word /></Cell>
        <Cell run badge={<span className="absolute top-[8px] left-[21px] flex h-5 w-[34px] items-center justify-center rounded-full bg-[#0078d4] text-[13.500px] text-white">99+</span>}><WhatsApp /></Cell>
        <Cell run badge={<span className="absolute top-[8px] left-[29px] flex h-5 w-5 items-center justify-center rounded-full bg-[#5f9a35] text-[12px] text-[#dcecc8]">V</span>}><Chrome /></Cell>
        <Cell run><Office letter="X" /></Cell>
        <Cell run><Gear /></Cell>
      </div>
      <div className="flex-1" />
      <div className="flex items-center pr-[24px] pb-px">
        <svg width="14" height="9" viewBox="0 0 14 9">
          <path d="M1 8L7 2L13 8" fill="none" stroke="#1c1c1c" strokeWidth="1.700" />
        </svg>
        <svg width="22" height="19" viewBox="0 0 22 19" className="ml-[23px]">
          <path d="M5 14Q1 14 1 10Q1 6 5 6Q7 1 12 2Q15 2 16 5Q20 6 20 10Q20 14 16 14Z" fill="#b9b9b9" stroke="#222" strokeWidth="1.300" />
          <path d="M6 6Q12 8 17 11L19 7Q15 2 11 2Q7 3 6 6Z" fill="#8a8a8a" />
          <circle cx="15" cy="13" r="5.500" fill="#fff" />
          <path d="M11.500 12A3.700 3.700 0 0 1 18 11M18.500 14A3.700 3.700 0 0 1 12 15.500M18.500 8.500V11.500H15.500M11.500 18V15H14.500" fill="none" stroke="#1373c8" strokeWidth="1.300" />
        </svg>
        <div className="ml-[13px] w-[48px] text-center text-[14.500px] leading-[20px] tracking-[0.050px]">
          <div>ENG</div>
          <div>IN</div>
        </div>
        <svg width="20" height="16" viewBox="0 0 20 16" className="ml-[13px]" fill="none" stroke="#1c1c1c" strokeWidth="1.300">
          <path d="M1 6A13 13 0 0 1 19 6M3.800 8.800A9 9 0 0 1 16.200 8.800M6.500 11.500A5 5 0 0 1 13.500 11.500" />
          <circle cx="10" cy="13.500" r="1.300" fill="#1c1c1c" />
        </svg>
        <svg width="22" height="18" viewBox="0 0 22 18" className="ml-[9px]" fill="none" stroke="#1c1c1c" strokeWidth="1.200">
          <path d="M1 6H4L9 2V16L4 12H1ZM12 6Q14 9 12 12M14.500 3.500Q18 9 14.500 14.500M17 1.500Q22.500 9 17 16.500" />
        </svg>
        <svg width="21" height="14" viewBox="0 0 21 14" className="ml-[9px]">
          <rect x="0.700" y="1" width="17" height="11.500" rx="2.500" fill="none" stroke="#1c1c1c" strokeWidth="1.300" />
          <rect x="2.500" y="3" width="4" height="7.500" rx="1" fill="#1c1c1c" />
          <path d="M18 4.500Q20.500 4.500 20.500 6.700T18 9Z" fill="#1c1c1c" />
        </svg>
        <div className="w-[97px] text-right text-[14.500px] leading-[20px] tracking-[0.200px] whitespace-nowrap">
          <div>12:02</div>
          <div>06-05-2025</div>
        </div>
      </div>
    </div>
  );
}

export default function App() {
  return (
    <div className="relative flex h-[1080px] w-[1920px] flex-col overflow-hidden bg-[#f3f2f1] font-['Open_Sans','Noto_Sans',sans-serif]">
      <TitleBar />
      <Tabs />
      <Ribbon />
      <div className="flex h-[821px]">
        <QueriesPane />
        <div className="w-[1360px] shrink-0">
          <FormulaBar />
          <DataTable />
        </div>
        <SettingsPane />
      </div>
      <div className="flex h-[28px] items-center justify-between border-t border-[#cfcfcf] pt-px pr-[6px] pl-[6px] text-[13.500px] text-[#444]">
        <div className="flex gap-[19px]">
          <span className="tracking-[-0.050px]">2 COLUMNS, 13 ROWS</span>
          <span className="tracking-[-0.130px]">Column profiling based on top 1000 rows</span>
        </div>
        <span>PREVIEW DOWNLOADED ON MONDAY</span>
      </div>
      <Taskbar />
      <Dialog />
    </div>
  );
}
